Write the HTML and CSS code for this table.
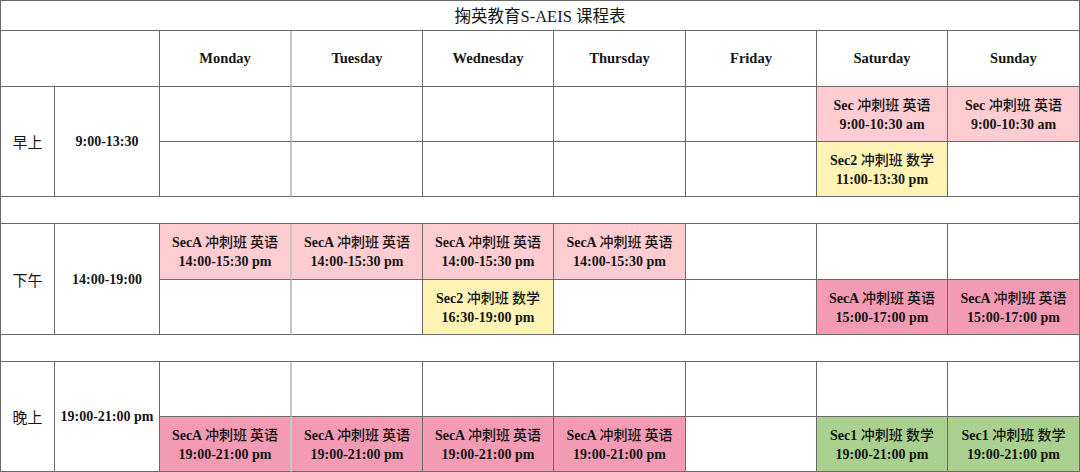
FILE: index.html
```html
<!DOCTYPE html>
<html lang="zh">
<head>
<meta charset="utf-8">
<title>掬英教育S-AEIS 课程表</title>
<link rel="stylesheet" href="styles.css">
</head>
<body>
<div class="sheet">
  <div class="cell title span-all"><p class="txt">掬英教育S-AEIS 课程表</p></div>

  <div class="cell head span-two"></div>
  <div class="cell head mon"><p class="txt">Monday</p></div>
  <div class="cell head"><p class="txt">Tuesday</p></div>
  <div class="cell head"><p class="txt">Wednesday</p></div>
  <div class="cell head"><p class="txt">Thursday</p></div>
  <div class="cell head"><p class="txt">Friday</p></div>
  <div class="cell head"><p class="txt">Saturday</p></div>
  <div class="cell head"><p class="txt">Sunday</p></div>

  <!-- morning -->
  <div class="cell label span-rows"><p class="txt cjk">早上</p></div>
  <div class="cell time span-rows"><p class="txt">9:00-13:30</p></div>
  <div class="cell mon"></div>
  <div class="cell"></div>
  <div class="cell"></div>
  <div class="cell"></div>
  <div class="cell"></div>
  <div class="cell pink"><p class="txt">Sec <span class="cjk">冲刺班 英语</span><br>9:00-10:30 am</p></div>
  <div class="cell pink"><p class="txt">Sec <span class="cjk">冲刺班 英语</span><br>9:00-10:30 am</p></div>

  <div class="cell mon"></div>
  <div class="cell"></div>
  <div class="cell"></div>
  <div class="cell"></div>
  <div class="cell"></div>
  <div class="cell yellow"><p class="txt">Sec2 <span class="cjk">冲刺班 数学</span><br>11:00-13:30 pm</p></div>
  <div class="cell"></div>

  <div class="cell gap span-all"></div>

  <!-- afternoon -->
  <div class="cell label span-rows"><p class="txt cjk">下午</p></div>
  <div class="cell time span-rows"><p class="txt">14:00-19:00</p></div>
  <div class="cell mon pink"><p class="txt">SecA <span class="cjk">冲刺班 英语</span><br>14:00-15:30 pm</p></div>
  <div class="cell pink"><p class="txt">SecA <span class="cjk">冲刺班 英语</span><br>14:00-15:30 pm</p></div>
  <div class="cell pink"><p class="txt">SecA <span class="cjk">冲刺班 英语</span><br>14:00-15:30 pm</p></div>
  <div class="cell pink"><p class="txt">SecA <span class="cjk">冲刺班 英语</span><br>14:00-15:30 pm</p></div>
  <div class="cell"></div>
  <div class="cell"></div>
  <div class="cell"></div>

  <div class="cell mon"></div>
  <div class="cell"></div>
  <div class="cell yellow"><p class="txt">Sec2 <span class="cjk">冲刺班 数学</span><br>16:30-19:00 pm</p></div>
  <div class="cell"></div>
  <div class="cell"></div>
  <div class="cell rose"><p class="txt">SecA <span class="cjk">冲刺班 英语</span><br>15:00-17:00 pm</p></div>
  <div class="cell rose"><p class="txt">SecA <span class="cjk">冲刺班 英语</span><br>15:00-17:00 pm</p></div>

  <div class="cell gap span-all"></div>

  <!-- evening -->
  <div class="cell label span-rows"><p class="txt cjk">晚上</p></div>
  <div class="cell time span-rows"><p class="txt">19:00-21:00 pm</p></div>
  <div class="cell mon"></div>
  <div class="cell"></div>
  <div class="cell"></div>
  <div class="cell"></div>
  <div class="cell"></div>
  <div class="cell"></div>
  <div class="cell"></div>

  <div class="cell mon rose"><p class="txt">SecA <span class="cjk">冲刺班 英语</span><br>19:00-21:00 pm</p></div>
  <div class="cell rose"><p class="txt">SecA <span class="cjk">冲刺班 英语</span><br>19:00-21:00 pm</p></div>
  <div class="cell rose"><p class="txt">SecA <span class="cjk">冲刺班 英语</span><br>19:00-21:00 pm</p></div>
  <div class="cell rose"><p class="txt">SecA <span class="cjk">冲刺班 英语</span><br>19:00-21:00 pm</p></div>
  <div class="cell"></div>
  <div class="cell green"><p class="txt">Sec1 <span class="cjk">冲刺班 数学</span><br>19:00-21:00 pm</p></div>
  <div class="cell green"><p class="txt">Sec1 <span class="cjk">冲刺班 数学</span><br>19:00-21:00 pm</p></div>
</div>
</body>
</html>
```

FILE: styles.css
```css
html, body {
  margin: 0;
  padding: 0;
  background: #ffffff;
}

body {
  font-family: "Liberation Serif", "Noto Sans CJK SC", serif;
  color: #151515;
}

.sheet {
  width: 1080px;
  box-sizing: border-box;
  display: grid;
  grid-template-columns: 54px 105px 132px 131px 131px 132px 131px 131px 132px;
  grid-template-rows: 30px 56px 55px 55px 27px 56px 55px 27px 55px 55px;
  border-top: 1px solid #6a6a6a;
  border-left: 1px solid #6a6a6a;
}

.cell {
  box-sizing: border-box;
  border-right: 1px solid #6a6a6a;
  border-bottom: 1px solid #6a6a6a;
  display: flex;
  align-items: center;
  justify-content: center;
  text-align: center;
  font-size: 14px;
  font-weight: bold;
  line-height: 19px;
}

.txt {
  margin: 0;
  white-space: nowrap;
}

.cjk {
  font-family: "Noto Sans CJK SC", sans-serif;
  font-weight: 500;
}

.span-all {
  grid-column: 1 / -1;
}

.span-two {
  grid-column: span 2;
}

.span-rows {
  grid-row: span 2;
}

.title {
  font-weight: normal;
  font-size: 16.5px;
  padding-top: 1px;
}

.head {
  font-size: 14.5px;
}

.mon {
  border-right: 2px solid #c6c6c6;
}

.label {
  font-size: 15px;
}

.label .txt {
  font-weight: 400;
}

.pink {
  background: #ffccd1;
}

.yellow {
  background: #fff3b5;
}

.rose {
  background: #f39bb4;
}

.green {
  background: #a9d08e;
}
```
